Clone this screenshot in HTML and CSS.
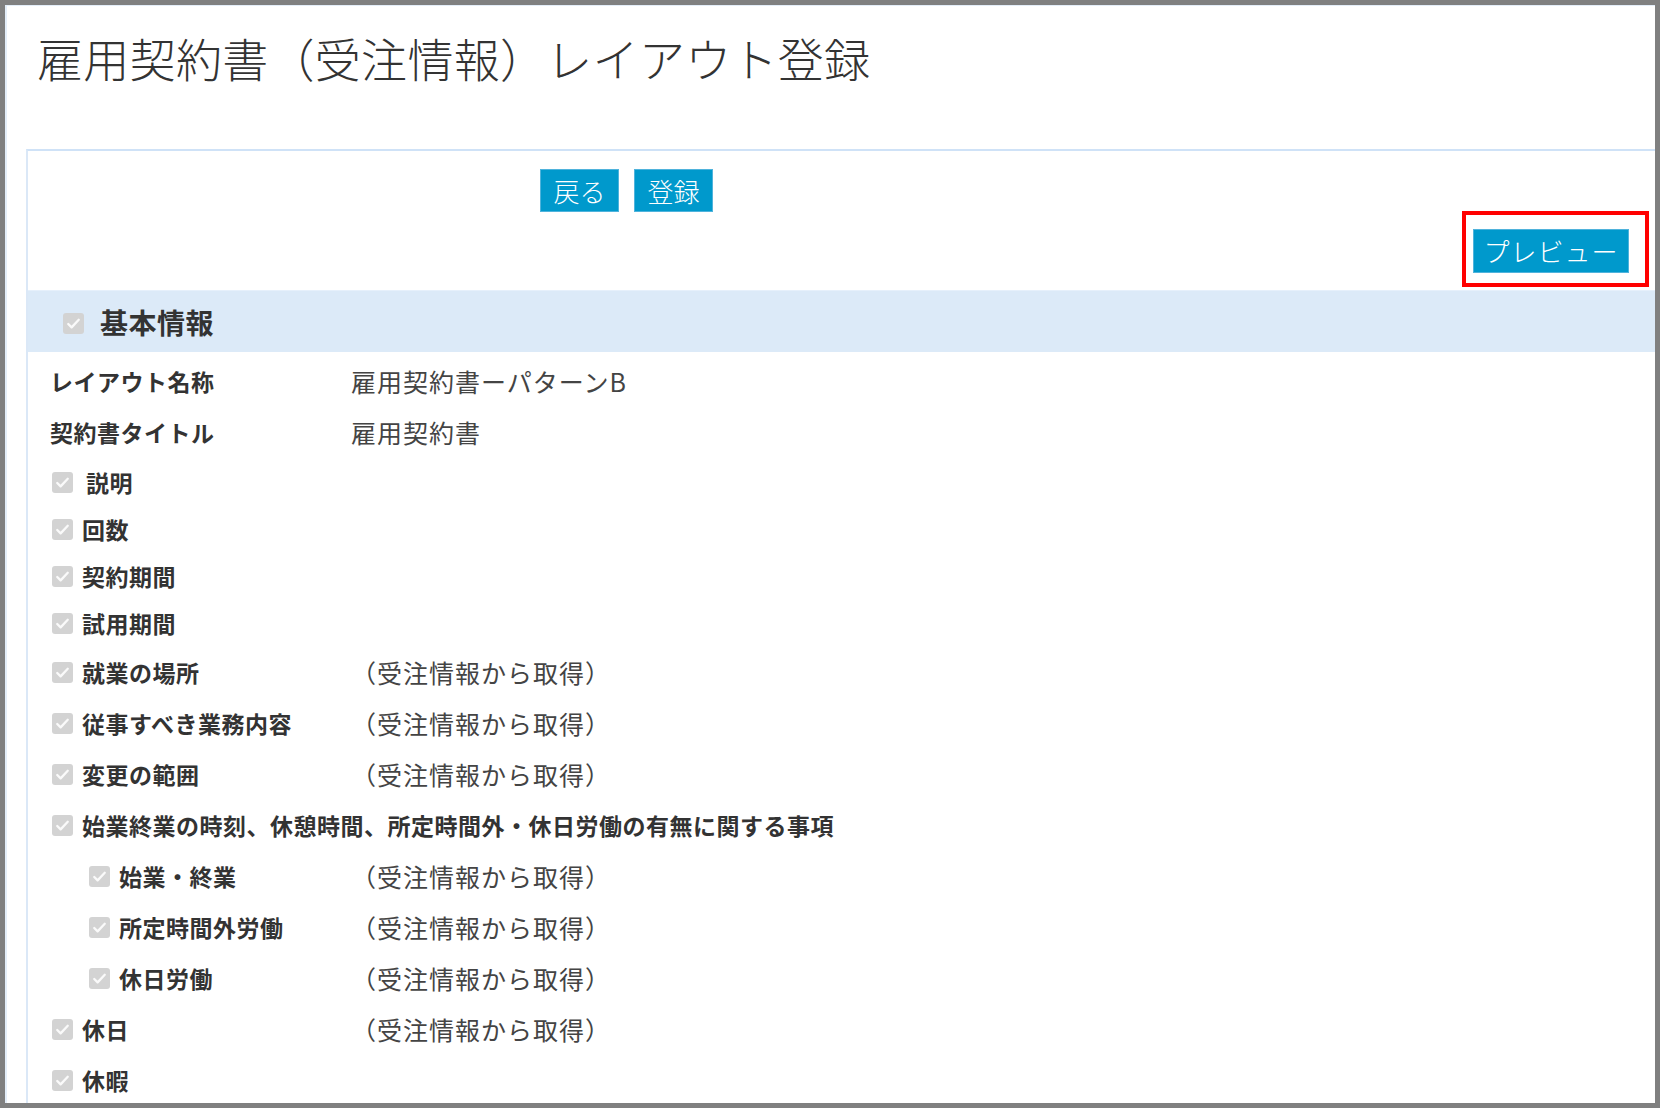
FILE: index.html
```html
<!DOCTYPE html>
<html lang="ja">
<head>
<meta charset="utf-8">
<title>雇用契約書（受注情報）レイアウト登録</title>
<link rel="stylesheet" href="styles.css">
</head>
<body>
<div class="frame">
  <div class="inner">
    <h1 class="title">雇用契約書（受注情報）レイアウト登録</h1>
    <div class="panel">
      <div class="toolbar">
        <button class="btn btn-sm">戻る</button>
        <button class="btn btn-sm">登録</button>
      </div>
      <div class="preview-row">
        <div class="highlight-wrap">
          <button class="btn btn-preview">プレビュー</button>
          <span class="highlight"></span>
        </div>
      </div>
      <div class="section-head">
        <span class="cb cb-head"><svg viewBox="0 0 20 20"><path d="M5 10.5l3.2 3.2L15 6.5" fill="none" stroke="#fafafa" stroke-width="2.2" stroke-linecap="round" stroke-linejoin="round"/></svg></span>
        <span class="section-title">基本情報</span>
      </div>
      <div class="rows">
        <div class="row tall"><span class="label plain">レイアウト名称</span><span class="value">雇用契約書ーパターンB</span></div>
        <div class="row tall"><span class="label plain">契約書タイトル</span><span class="value">雇用契約書</span></div>
        <div class="row short first-check"><span class="cb"><svg viewBox="0 0 20 20"><path d="M5 10.5l3.2 3.2L15 6.5" fill="none" stroke="#fafafa" stroke-width="2.2" stroke-linecap="round" stroke-linejoin="round"/></svg></span><span class="label wide-gap">説明</span></div>
        <div class="row short"><span class="cb"><svg viewBox="0 0 20 20"><path d="M5 10.5l3.2 3.2L15 6.5" fill="none" stroke="#fafafa" stroke-width="2.2" stroke-linecap="round" stroke-linejoin="round"/></svg></span><span class="label">回数</span></div>
        <div class="row short"><span class="cb"><svg viewBox="0 0 20 20"><path d="M5 10.5l3.2 3.2L15 6.5" fill="none" stroke="#fafafa" stroke-width="2.2" stroke-linecap="round" stroke-linejoin="round"/></svg></span><span class="label">契約期間</span></div>
        <div class="row short"><span class="cb"><svg viewBox="0 0 20 20"><path d="M5 10.5l3.2 3.2L15 6.5" fill="none" stroke="#fafafa" stroke-width="2.2" stroke-linecap="round" stroke-linejoin="round"/></svg></span><span class="label">試用期間</span></div>
        <div class="row tall"><span class="cb"><svg viewBox="0 0 20 20"><path d="M5 10.5l3.2 3.2L15 6.5" fill="none" stroke="#fafafa" stroke-width="2.2" stroke-linecap="round" stroke-linejoin="round"/></svg></span><span class="label">就業の場所</span><span class="value">（受注情報から取得）</span></div>
        <div class="row tall"><span class="cb"><svg viewBox="0 0 20 20"><path d="M5 10.5l3.2 3.2L15 6.5" fill="none" stroke="#fafafa" stroke-width="2.2" stroke-linecap="round" stroke-linejoin="round"/></svg></span><span class="label">従事すべき業務内容</span><span class="value">（受注情報から取得）</span></div>
        <div class="row tall"><span class="cb"><svg viewBox="0 0 20 20"><path d="M5 10.5l3.2 3.2L15 6.5" fill="none" stroke="#fafafa" stroke-width="2.2" stroke-linecap="round" stroke-linejoin="round"/></svg></span><span class="label">変更の範囲</span><span class="value">（受注情報から取得）</span></div>
        <div class="row tall"><span class="cb"><svg viewBox="0 0 20 20"><path d="M5 10.5l3.2 3.2L15 6.5" fill="none" stroke="#fafafa" stroke-width="2.2" stroke-linecap="round" stroke-linejoin="round"/></svg></span><span class="label nowrap">始業終業の時刻、休憩時間、所定時間外・休日労働の有無に関する事項</span></div>
        <div class="row tall sub"><span class="cb"><svg viewBox="0 0 20 20"><path d="M5 10.5l3.2 3.2L15 6.5" fill="none" stroke="#fafafa" stroke-width="2.2" stroke-linecap="round" stroke-linejoin="round"/></svg></span><span class="label">始業・終業</span><span class="value">（受注情報から取得）</span></div>
        <div class="row tall sub"><span class="cb"><svg viewBox="0 0 20 20"><path d="M5 10.5l3.2 3.2L15 6.5" fill="none" stroke="#fafafa" stroke-width="2.2" stroke-linecap="round" stroke-linejoin="round"/></svg></span><span class="label">所定時間外労働</span><span class="value">（受注情報から取得）</span></div>
        <div class="row tall sub"><span class="cb"><svg viewBox="0 0 20 20"><path d="M5 10.5l3.2 3.2L15 6.5" fill="none" stroke="#fafafa" stroke-width="2.2" stroke-linecap="round" stroke-linejoin="round"/></svg></span><span class="label">休日労働</span><span class="value">（受注情報から取得）</span></div>
        <div class="row tall"><span class="cb"><svg viewBox="0 0 20 20"><path d="M5 10.5l3.2 3.2L15 6.5" fill="none" stroke="#fafafa" stroke-width="2.2" stroke-linecap="round" stroke-linejoin="round"/></svg></span><span class="label">休日</span><span class="value">（受注情報から取得）</span></div>
        <div class="row tall"><span class="cb"><svg viewBox="0 0 20 20"><path d="M5 10.5l3.2 3.2L15 6.5" fill="none" stroke="#fafafa" stroke-width="2.2" stroke-linecap="round" stroke-linejoin="round"/></svg></span><span class="label">休暇</span></div>
      </div>
    </div>
  </div>
</div>
</body>
</html>
```
FILE: styles.css
```css
* { box-sizing: border-box; }
html, body {
  margin: 0;
  padding: 0;
  background: #ffffff;
}
body {
  font-family: "Noto Sans CJK JP", "Noto Sans", "Liberation Sans", sans-serif;
  color: #333333;
}
.frame {
  width: 1660px;
  height: 1108px;
  border: 5px solid #808080;
  overflow: hidden;
  background: #ffffff;
}
.inner {
  height: 100%;
  border-top: 1px solid #e4eef9;
  border-left: 2px solid #e4eef9;
}
.title {
  margin: 0;
  padding: 23px 0 0 30px;
  height: 143px;
  font-size: 46px;
  line-height: 56px;
  font-weight: 300;
  color: #333333;
  letter-spacing: 0.3px;
}
.panel {
  margin-left: 19px;
  border-top: 2px solid #cfe2f7;
  border-left: 2px solid #dbe8f7;
  height: 1000px;
}
.toolbar {
  display: flex;
  gap: 15px;
  padding: 18px 0 0 512px;
}
.btn {
  font-family: "Noto Sans CJK JP", "Noto Sans", sans-serif;
  background: #0099cc;
  color: #ffffff;
  border: 1px solid #4fb3dc;
  font-weight: 300;
  padding: 0;
  cursor: pointer;
}
.btn-sm {
  width: 79px;
  height: 43px;
  font-size: 26px;
  line-height: 1;
}
.preview-row {
  display: flex;
  justify-content: flex-end;
  padding: 17px 26px 0 0;
}
.highlight-wrap {
  position: relative;
}
.btn-preview {
  width: 156px;
  height: 44px;
  font-size: 26px;
  letter-spacing: 1px;
  line-height: 1;
}
.highlight {
  position: absolute;
  top: -18px;
  left: -11px;
  right: -20px;
  bottom: -14px;
  border: 4px solid #ff0000;
  pointer-events: none;
}
.section-head {
  margin-top: 17px;
  height: 62px;
  border-top: 1px solid #e6f0fb;
  background: #dceaf8;
  display: flex;
  align-items: center;
  padding-left: 35px;
  gap: 16px;
}
.section-title {
  font-size: 28px;
  font-weight: 700;
  color: #333333;
  line-height: 1;
  letter-spacing: 0.5px;
}
.cb {
  width: 21px;
  height: 21px;
  border-radius: 3px;
  background: #d3d3d3;
  display: inline-flex;
  flex: none;
}
.cb svg {
  width: 21px;
  height: 21px;
}
.cb-head {
  margin-top: 3px;
}
.rows {
  padding: 4px 0 0 22px;
}
.row {
  display: flex;
  align-items: center;
}
.row.tall { height: 51px; }
.row.short { height: 47px; }
.row.first-check { height: 48px; }
.row .cb {
  margin-left: 2px;
  margin-right: 9px;
}
.row.sub .cb {
  margin-left: 39px;
}
.label {
  font-size: 23px;
  font-weight: 700;
  color: #333333;
  line-height: 1;
  letter-spacing: 0.5px;
  width: 269px;
  white-space: nowrap;
}
.row.sub .label { width: 232px; }
.label.plain { width: 301px; }
.label.wide-gap { margin-left: 4px; width: 265px; }
.label.nowrap { width: auto; }
.value {
  font-size: 25px;
  font-weight: 400;
  color: #444444;
  line-height: 1;
  letter-spacing: 1px;
  white-space: nowrap;
}
```
